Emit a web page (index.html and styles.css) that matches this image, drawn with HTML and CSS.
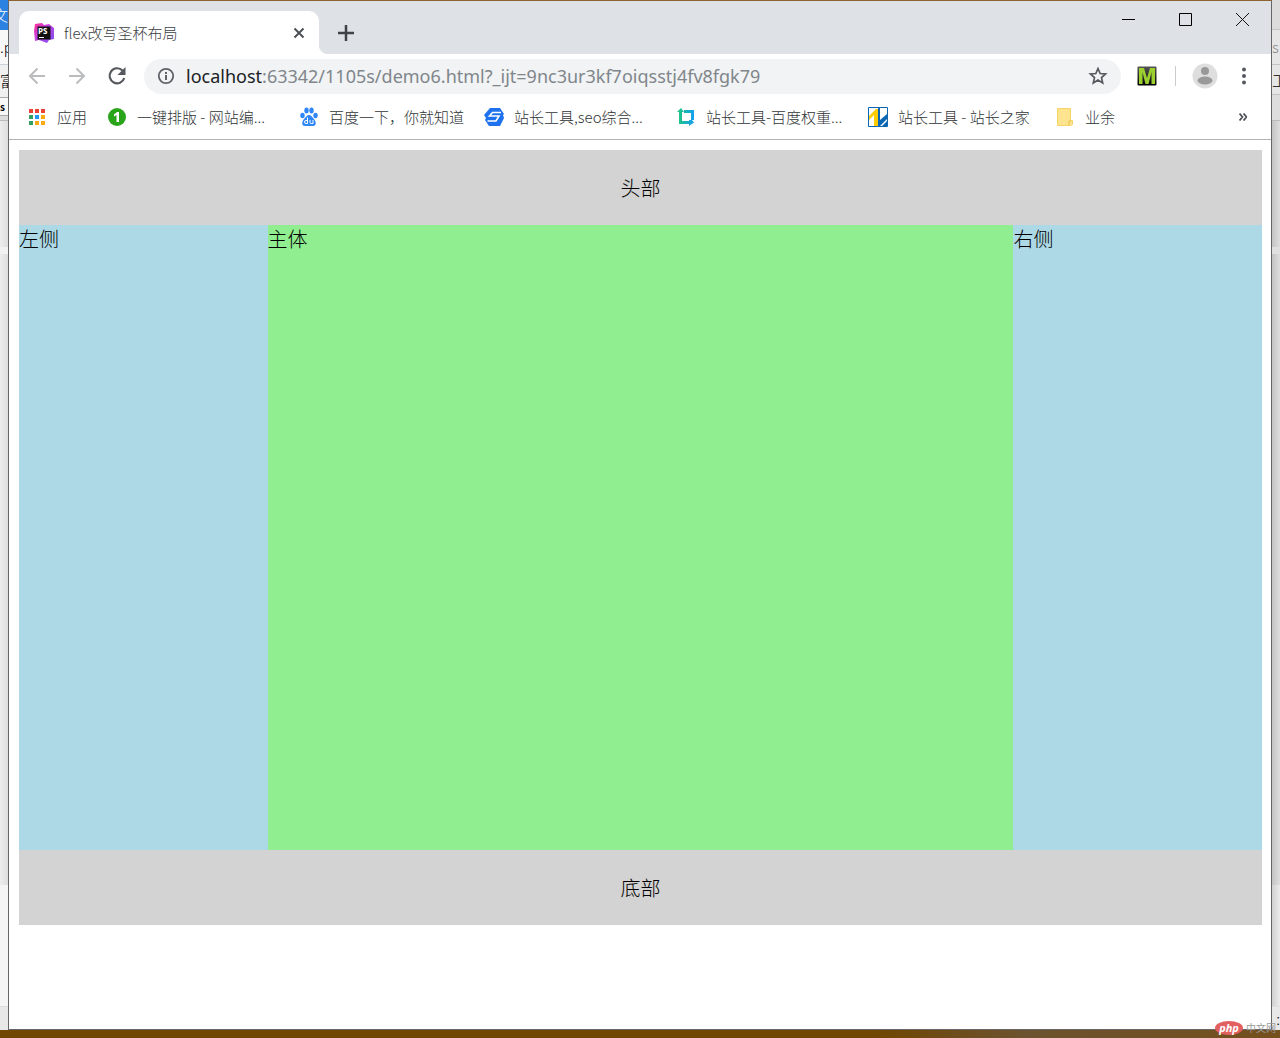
FILE: index.html
```html
<!DOCTYPE html>
<html lang="zh-CN">
<head>
<meta charset="utf-8">
<title>flex改写圣杯布局</title>
<link rel="stylesheet" href="styles.css">
</head>
<body>
<div class="desktop">
  <aside class="behind behind-left">
    <div class="strip strip-blue">文</div>
    <div class="strip strip-file">.p</div>
    <div class="strip strip-menu">富</div>
    <div class="strip strip-field">s</div>
    <div class="strip strip-edge"></div>
    <div class="strip strip-pane"></div>
    <div class="strip strip-canvas"></div>
    <div class="strip strip-light"></div>
    <div class="strip strip-status"></div>
  </aside>

  <div class="window">
    <header class="titlebar">
      <div class="tab">
        <svg class="tab-icon" viewBox="0 0 20 20" aria-hidden="true">
          <defs><linearGradient id="ps" x1="0" y1="0" x2="1" y2="1"><stop offset="0" stop-color="#ff2d90"/><stop offset=".4" stop-color="#c840e0"/><stop offset="1" stop-color="#7a50f5"/></linearGradient></defs>
          <path fill="url(#ps)" d="M1 1 8 0 10 2 15 1 20 5 20 16 15 17 13 20 5 17 1 18 0 8z"/>
          <path fill="#111" d="M3.500 3.500h13v13h-13z"/>
          <path fill="#fff" d="M5 14h5v1H5z"/>
          <text x="4" y="11" class="ps-text">PS</text>
        </svg>
        <span class="tab-title">flex改写圣杯布局</span>
        <button class="icon-button" aria-label="关闭标签页"><svg width="12" height="12" viewBox="0 0 12 12"><path d="m1.500 1.500 9 9m0-9-9 9" stroke="#4d5156" stroke-width="2"/></svg></button>
      </div>
      <button class="icon-button new-tab" aria-label="新标签页"><svg width="16" height="16" viewBox="0 0 16 16"><path d="M8 0v16M0 8h16" stroke="#3f4347" stroke-width="2.500"/></svg></button>
      <div class="window-controls">
        <button class="icon-button" aria-label="最小化"><svg width="13" height="13" viewBox="0 0 13 13"><path d="M0 6.500h13" stroke="#000"/></svg></button>
        <button class="icon-button" aria-label="最大化"><svg width="13" height="13" viewBox="0 0 13 13"><path d="M.5.5h12v12H.5z" stroke="#000" fill="none"/></svg></button>
        <button class="icon-button" aria-label="关闭"><svg width="13" height="13" viewBox="0 0 13 13"><path d="m0 0 13 13m0-13L0 13" stroke="#111"/></svg></button>
      </div>
    </header>

    <div class="toolbar">
      <button class="icon-button nav" aria-label="后退"><svg width="20" height="20" viewBox="0 0 20 20"><path d="M18 10H3m7.500-7.500L3 10l7.500 7.500" fill="none" stroke="#babcbe" stroke-width="2"/></svg></button>
      <button class="icon-button nav" aria-label="前进"><svg width="20" height="20" viewBox="0 0 20 20"><path d="M2 10h15M9.500 2.500 17 10l-7.500 7.500" fill="none" stroke="#babcbe" stroke-width="2"/></svg></button>
      <button class="icon-button nav" aria-label="重新加载"><svg width="20" height="20" viewBox="0 0 20 20"><path d="M15.500 4.500A7.500 7.500 0 1 0 17.300 12" fill="none" stroke="#55595e" stroke-width="2.200"/><path d="M18.500 1v8h-8z" fill="#55595e"/></svg></button>
      <div class="address">
        <svg width="18" height="18" viewBox="0 0 18 18" aria-hidden="true"><circle cx="9" cy="9" r="7.200" fill="none" stroke="#5f6368" stroke-width="1.800"/><path d="M8 8h2v5H8zM8 5h2v2H8z" fill="#5f6368"/></svg>
        <a class="url" href="#"><span class="host">localhost</span>:63342/1105s/demo6.html?_ijt=9nc3ur3kf7oiqsstj4fv8fgk79</a>
        <button class="icon-button" aria-label="收藏"><svg width="20" height="20" viewBox="0 0 20 20"><path d="m10 2.500 2.200 5 5.400.5-4.100 3.600 1.200 5.300-4.700-2.800-4.700 2.800 1.200-5.300L2.400 8l5.400-.5z" fill="none" stroke="#55595e" stroke-width="1.700"/></svg></button>
      </div>
      <button class="icon-button" aria-label="扩展程序"><svg width="20" height="20" viewBox="0 0 20 20"><defs><linearGradient id="mg" x2="0" y2="1"><stop stop-color="#555"/><stop offset="1" stop-color="#000"/></linearGradient></defs><rect width="19" height="19" x=".5" y=".5" rx="1" fill="url(#mg)"/><path d="M2 18V2h5l3 10 3-10h5v16h-3.500V6L11.500 18h-3L5.500 6v12z" fill="#9bd02e"/></svg></button>
      <span class="divider"></span>
      <button class="icon-button" aria-label="用户"><svg width="26" height="26" viewBox="0 0 26 26"><circle cx="13" cy="13" r="12.500" fill="#dedede"/><circle cx="13" cy="8" r="4" fill="#999"/><ellipse cx="13" cy="17.500" rx="7.500" ry="4" fill="#999"/></svg></button>
      <button class="icon-button menu" aria-label="菜单"><svg width="6" height="18" viewBox="0 0 6 18"><g fill="#55595e"><circle cx="3" cy="2.500" r="2"/><circle cx="3" cy="9" r="2"/><circle cx="3" cy="15.500" r="2"/></g></svg></button>
    </div>

    <nav class="bookmarks">
      <a href="#" class="bookmark"><svg viewBox="0 0 20 20"><path fill="#ea4335" d="M2 2h4v4H2zM8 2h4v4H8zM14 2h4v4h-4z"/><path fill="#34a060" d="M2 8h4v4H2zM2 14h4v4H2z"/><path fill="#2196f3" d="M8 8h4v4H8z"/><path fill="#fbab10" d="M14 8h4v4h-4zM8 14h4v4H8zM14 14h4v4h-4z"/></svg><span>应用</span></a>
      <a href="#" class="bookmark wide"><svg viewBox="0 0 20 20"><circle cx="10" cy="10" r="9" fill="#2aa51b"/><path fill="#fff" d="M7 7.500 10 5h2v10H9.500V8L7 9.500z"/></svg><span>一键排版 - 网站编...</span></a>
      <a href="#" class="bookmark"><svg viewBox="0 0 20 20"><g fill="#2f86f6"><ellipse cx="3.500" cy="8.500" rx="2.200" ry="2.700"/><ellipse cx="7.500" cy="3.500" rx="2.200" ry="2.900"/><ellipse cx="12.500" cy="3.500" rx="2.200" ry="2.900"/><ellipse cx="16.500" cy="8.500" rx="2.200" ry="2.700"/><path d="M10 8c2 0 3 2 5 4s3 7-1 7H6c-4 0-3-5-1-7s3-4 5-4z"/></g><path d="M8.500 10.500v6H7a1.500 1.500 0 0 1 0-3h1.500M11 13v2.500q0 1 1.200 1H14V13" fill="none" stroke="#fff"/></svg><span>百度一下，你就知道</span></a>
      <a href="#" class="bookmark wide"><svg viewBox="0 0 20 20"><path d="M6 1h10l4 6-1 1 1 3-4 8H5l-4-6 1-2-2-3z" fill="#1f72ee"/><path d="M17 5.500H8.500L5.500 9H15l-3 5H3.500" fill="none" stroke="#fff" stroke-width="1.600"/></svg><span>站长工具,seo综合...</span></a>
      <a href="#" class="bookmark wide"><svg viewBox="0 0 20 20"><defs><linearGradient id="cr"><stop stop-color="#20c878"/><stop offset="1" stop-color="#159ff2"/></linearGradient></defs><path d="M3 5v12h10v2l5-3.500-2-2.500h2V3H8v3h7v7h-2v1H6V5h2L5 1 1 5z" fill="url(#cr)"/></svg><span>站长工具-百度权重...</span></a>
      <a href="#" class="bookmark home"><svg viewBox="0 0 20 20"><path d="M.5.5h19v19H.5z" fill="#fff" stroke="#0b67b2"/><path d="M1 9 8 2h2v17H6V8l-5 5z" fill="#fc0"/><path d="M10 1h2v12l7-6v5l-7 7h-2zM19 14v5h-5z" fill="#0b67b2"/></svg><span>站长工具 - 站长之家</span></a>
      <a href="#" class="bookmark"><svg viewBox="0 0 20 20"><path d="M2.500 1.500h13v12h2v4l-2 1h-13z" fill="#ffe48f" stroke="#f6d365"/><path d="M14 18v-4h2" fill="none" stroke="#e8bf47"/></svg><span>业余</span></a>
      <button class="icon-button more" aria-label="更多书签"><svg width="8" height="8" viewBox="0 0 8 8"><path d="m.5.5 3 3.500-3 3.500m4-7 3 3.500-3 3.500" fill="none" stroke="#4a4e52" stroke-width="1.700"/></svg></button>
    </nav>

    <div class="page">
      <header class="page-bar">头部</header>
      <div class="page-body">
        <aside class="side">左侧</aside>
        <main class="content">主体</main>
        <aside class="side">右侧</aside>
      </div>
      <footer class="page-bar">底部</footer>
    </div>
  </div>

  <aside class="behind behind-right">
    <div class="strip strip-blank"></div>
    <div class="strip strip-search">s</div>
    <div class="strip strip-tool">工</div>
    <div class="strip strip-edge"></div>
    <div class="strip strip-pane"></div>
    <div class="strip strip-canvas"></div>
    <div class="strip strip-light"></div>
    <div class="strip strip-status">:</div>
  </aside>
  <div class="taskbar"></div>
  <div class="watermark"><span class="badge">php</span><span class="site">中文网</span></div>
</div>
</body>
</html>
```

FILE: styles.css
```css
* { box-sizing: border-box; }

body {
  margin: 0;
  font-family: "Noto Sans CJK SC", "Noto Sans", sans-serif;
  font-weight: 300;
  color: #000;
}

.desktop {
  position: relative;
  display: grid;
  grid-template-columns: 8px minmax(0, 1fr) 8px;
  grid-template-rows: minmax(0, 1fr) 8px;
  min-height: 100vh;
}

/* applications visible at both sides of the browser window */
.behind {
  display: flex;
  flex-direction: column;
  overflow: hidden;
}

.strip {
  display: flex;
  flex: none;
  align-items: center;
  overflow: hidden;
  white-space: nowrap;
  font-size: 15px;
  line-height: 20px;
}

.strip-blue { height: 30px; justify-content: flex-end; background: #2b82e0; color: #fff; }
.strip-file { height: 35px; background: #f8f8f8; border-bottom: 1px solid #ccd2d8; }
.strip-menu { height: 33px; background: #f0f0f0; border-bottom: 1px solid #aaa; }
.strip-field { height: 18px; background: #f8f8f8; border-bottom: 1px solid #aaa; font-size: 10px; font-weight: 700; }
.strip-blank { height: 30px; background: #dcdcdc; border-bottom: 1px solid #c4c4c4; }
.strip-search { height: 35px; background: #e6e6e6; border-bottom: 1px solid #c4c4c4; color: #888; }
.strip-tool { height: 30px; background: #e6e6e6; border-bottom: 1px solid #c4c4c4; }
.strip-edge { height: 5px; background: #ddd; border-bottom: 1px solid #bbb; }
.behind-right .strip-edge { height: 26px; }
.strip-pane { height: 126px; }
.strip-canvas { height: 638px; border-top: 7px solid #f2f2f2; }
.strip-light { height: 122px; background: #f5f5f5; border-bottom: 1px solid #ddd; }
.strip-status { flex: 1; justify-content: flex-end; background: #e8e8e8; }

.behind-left { background: linear-gradient(90deg, #ededed, #dedede); }
.behind-right { background: linear-gradient(90deg, #c4c4c4, #dedede); }
.behind-right .strip-canvas { border-top-color: #e0e0e0; }
.behind-right .strip-light { background: linear-gradient(90deg, #d0d0d0, #ececec); }

.window {
  display: flex;
  flex-direction: column;
  background: #fff;
  border: 1px solid #666;
  border-top-color: #8c622d;
}

.icon-button {
  display: flex;
  flex: none;
  align-items: center;
  justify-content: center;
  padding: 0;
  border: 0;
  background: none;
}

.titlebar {
  display: flex;
  align-items: flex-end;
  height: 53px;
  padding-left: 10px;
  background: #dee1e6;
}

.tab {
  display: flex;
  align-items: center;
  width: 300px;
  height: 43px;
  padding: 0 14px 0 15px;
  border-radius: 10px 10px 0 0;
  background: #fff;
}

.tab-icon { width: 20px; height: 20px; }
.ps-text { font: 700 8px "Open Sans", sans-serif; fill: #fff; }

.tab-title {
  flex: 1;
  padding-left: 10px;
  color: #3c4043;
  font-size: 15px;
  line-height: 20px;
}

/* the rounded foot where the tab meets the toolbar */
.new-tab {
  width: 53px;
  height: 43px;
  background: radial-gradient(circle at 10px 33px, #dee1e6 10px, #fff 11px) left bottom / 10px 10px no-repeat;
  background: radial-gradient(circle at 100% 0, #dee1e6 10px, #fff 11px) left bottom / 10px 10px no-repeat;
}

.window-controls {
  display: flex;
  align-self: flex-start;
  margin-left: auto;
}

.window-controls .icon-button { width: 57px; height: 37px; }

.toolbar {
  display: flex;
  align-items: center;
  height: 44px;
  padding: 0 16px 0 8px;
}

.nav { width: 40px; height: 40px; }

.address {
  display: flex;
  flex: 1;
  align-items: center;
  gap: 11px;
  min-width: 0;
  height: 35px;
  margin: 0 16px 0 7px;
  padding: 0 13px;
  border-radius: 18px;
  background: #f1f3f4;
}

.url {
  flex: 1;
  overflow: hidden;
  color: #80868b;
  font-family: "Noto Sans", sans-serif;
  font-size: 18px;
  font-weight: 400;
  line-height: 24px;
  text-decoration: none;
  white-space: nowrap;
}

.host { color: #202124; }

.divider { width: 1px; height: 20px; margin: 0 16px 0 18px; background: #ccc; }
.menu { width: 22px; margin-left: 15px; }

.bookmarks {
  display: flex;
  align-items: center;
  gap: 20px;
  height: 42px;
  padding: 0 24px 4px 18px;
  border-bottom: 1px solid #b0b2b4;
}

.bookmark {
  display: flex;
  flex: none;
  align-items: center;
  gap: 10px;
  color: #303436;
  font-size: 15px;
  line-height: 20px;
  text-decoration: none;
  white-space: nowrap;
}

.bookmark svg { width: 20px; height: 20px; }
.wide { width: 172px; }
.home { width: 167px; }
.more { margin-left: auto; }

.page {
  padding: 10px 9px 10px 10px;
  font-size: 20px;
  line-height: 28px;
}

.page-bar {
  height: 75px;
  background: lightgray;
  line-height: 75px;
  text-align: center;
}

.page-body {
  display: grid;
  grid-template-columns: 1fr 3fr 1fr;
  min-height: 625px;
}

.side { background: lightblue; }
.content { background: lightgreen; }

.taskbar {
  grid-column: 1 / -1;
  background: linear-gradient(90deg, #704600 68%, #6c5230 80%, #74501c);
}

.watermark {
  position: absolute;
  right: 4px;
  bottom: 3px;
  display: flex;
  align-items: center;
  gap: 3px;
  line-height: 14px;
}

.badge {
  width: 28px;
  border-radius: 50%;
  background: #e26060;
  color: #fff;
  font: italic 700 11px/14px "Open Sans", sans-serif;
  text-align: center;
}

.site { color: #999; font-size: 10px; font-weight: 400; }
```
